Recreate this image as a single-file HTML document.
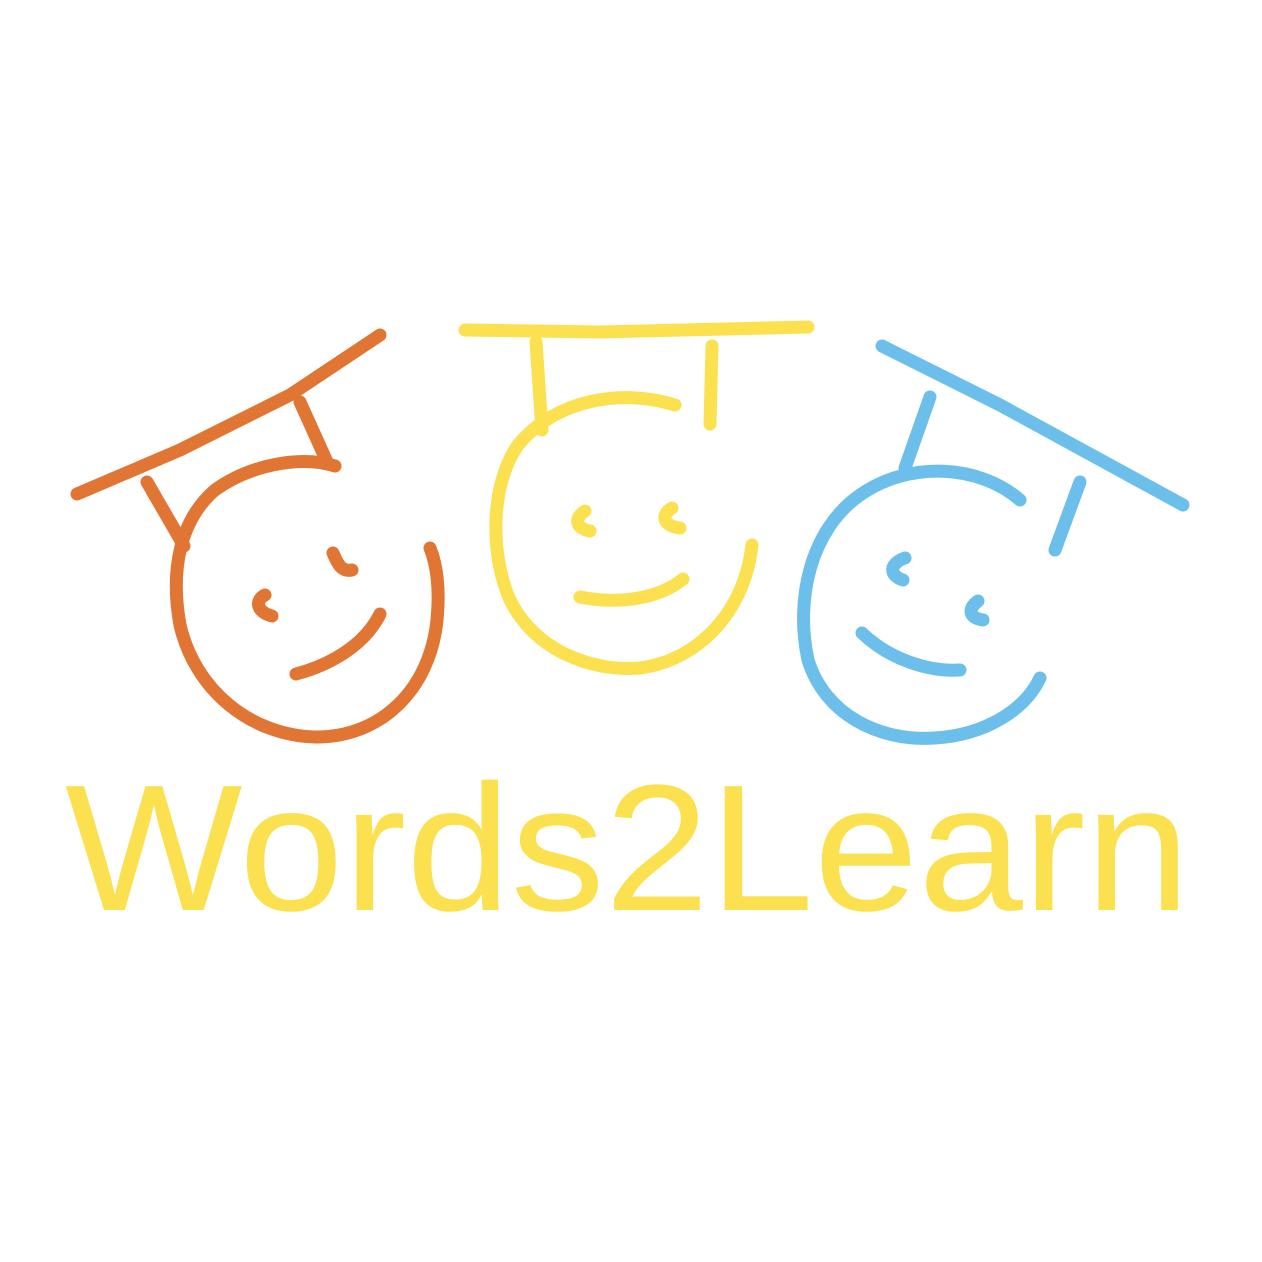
<!DOCTYPE html>
<html><head><meta charset="utf-8"><style>
html,body{margin:0;padding:0;background:#fff;width:1262px;height:1262px;overflow:hidden}
svg{display:block}
</style></head><body>
<svg width="1262" height="1262" viewBox="0 0 1262 1262" xmlns="http://www.w3.org/2000/svg">
<g fill="none" stroke-linecap="round" stroke-linejoin="round">
<g stroke="#E07534" stroke-width="13">
<path d="M77 494 L180 450 L290 395 L380 335"/>
<path d="M147 482 L184 546"/>
<path d="M300 402 L328 464"/>
<path d="M335 466 C300 455 250 465 215 490 C180 520 170 570 180 625 C195 690 250 735 315 737 C380 738 430 690 437 620 C440 590 437 565 430 548"/>
<path d="M265 595 C255 600 256 612 272 616"/>
<path d="M333 553 C338 565 342 572 352 570"/>
<path d="M296 674 C330 665 365 645 380 614"/>
</g>
<g stroke="#FBE050" stroke-width="13">
<path d="M465 330 L600 332 L808 327"/>
<path d="M536 342 L542 430"/>
<path d="M712 346 L710 424"/>
<path d="M675 405 C620 388 555 400 518 445 C490 485 490 555 510 600 C535 650 590 672 640 668 C700 660 745 610 752 545"/>
<path d="M585 511 C574 518 575 528 590 531"/>
<path d="M672 508 C661 514 662 526 680 528"/>
<path d="M580 597 C620 605 660 598 683 579"/>
</g>
<g stroke="#6BBFEA" stroke-width="13">
<path d="M882 346 L1000 405 L1183 505"/>
<path d="M930 397 L905 468"/>
<path d="M1080 482 L1055 550"/>
<path d="M1020 500 C980 465 910 460 860 495 C810 530 795 600 808 660 C825 715 880 742 935 738 C985 735 1025 710 1040 678"/>
<path d="M905 558 C890 563 888 575 903 580"/>
<path d="M978 601 C968 608 968 618 983 620"/>
<path d="M862 633 C890 660 930 672 960 670"/>
</g>
</g>
<text x="65" y="910" textLength="1125" lengthAdjust="spacingAndGlyphs" font-family="Liberation Sans, sans-serif" font-size="180" fill="#FBE050">Words2Learn</text>
</svg>
</body></html>
